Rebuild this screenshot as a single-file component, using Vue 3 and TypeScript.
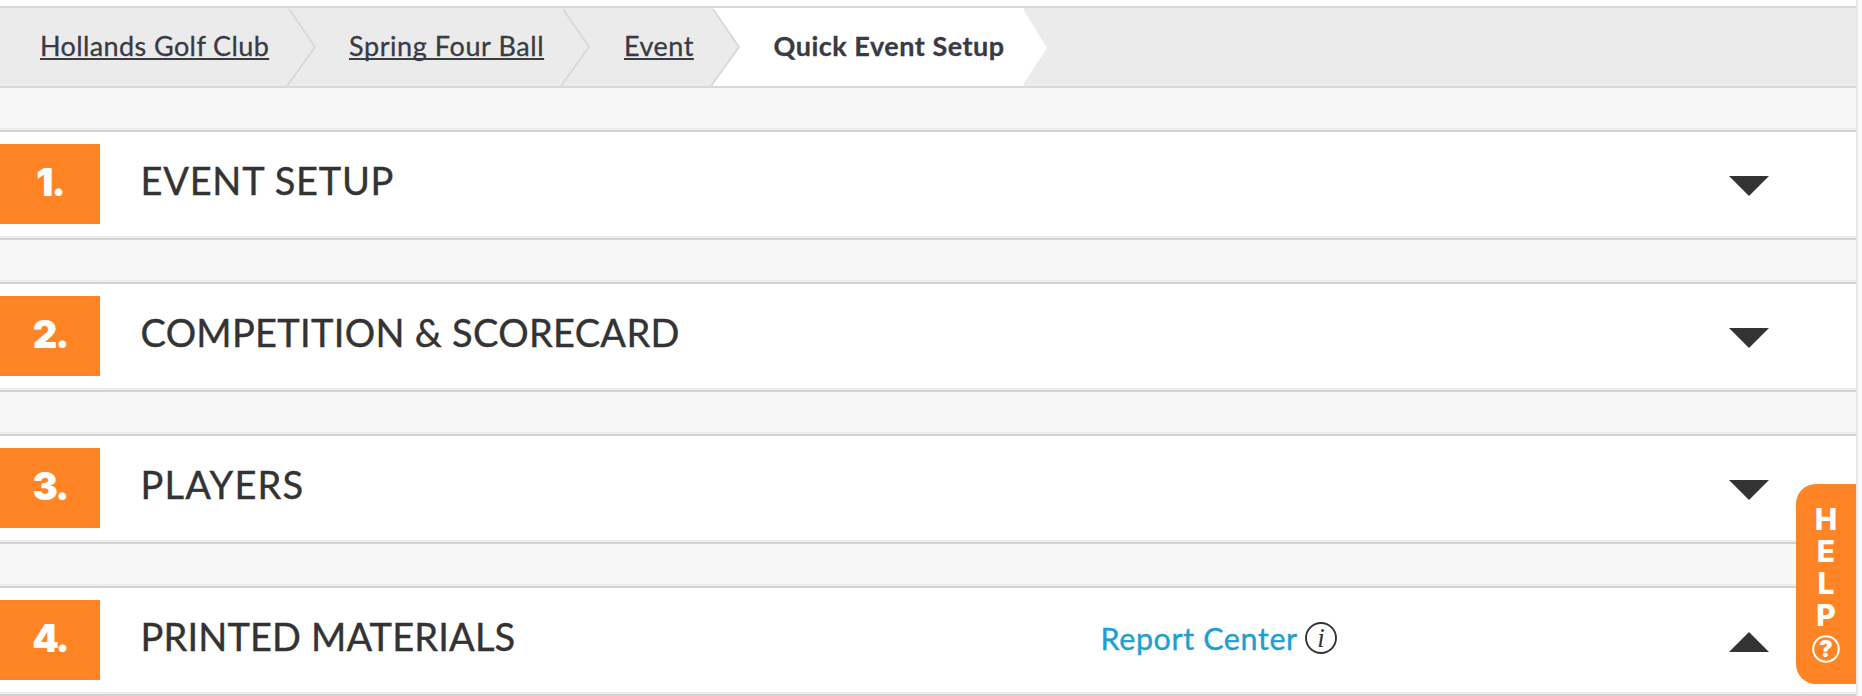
<script setup lang="ts">
interface Crumb { label: string; key: string }
interface Section { title: string; key: string; open: boolean; link?: string }

const crumbs: Crumb[] = [
  { label: 'Hollands Golf Club', key: 'club' },
  { label: 'Spring Four Ball', key: 'tournament' },
  { label: 'Event', key: 'event' },
]

const sections: Section[] = [
  { title: 'EVENT SETUP', key: 'setup', open: false },
  { title: 'COMPETITION & SCORECARD', key: 'scorecard', open: false },
  { title: 'PLAYERS', key: 'players', open: false },
  { title: 'PRINTED MATERIALS', key: 'printed', open: true, link: 'Report Center' },
]
</script>

<template>
  <div class="page">
    <main class="content">
      <nav class="breadcrumbs">
        <div v-for="(crumb, i) in crumbs" :key="crumb.key" class="crumb" :class="crumb.key">
          <a>{{ crumb.label }}</a>
          <svg class="chevron" width="30" height="78" viewBox="0 0 30 78">
            <path v-if="i === crumbs.length - 1" d="M3 0H30V78H3V76L29 39L3 2Z" fill="#fff" />
            <path d="M3 1L29 39L1 78" fill="none" stroke="#d8d8d8" stroke-width="1.8" />
          </svg>
        </div>
        <div class="current"><span>Quick Event Setup</span></div>
        <svg width="24" height="78" viewBox="0 0 24 78">
          <path d="M0 0H1V2.500L24 40L1 75V78H0Z" fill="#fff" />
        </svg>
      </nav>

      <section v-for="(section, i) in sections" :key="section.key" class="section">
        <div class="number">{{ i + 1 }}.</div>
        <h2 class="title" :class="section.key">{{ section.title }}</h2>
        <div v-if="section.link" class="report">
          <a>{{ section.link }}</a>
          <svg width="32" height="32" viewBox="0 0 32 32">
            <circle cx="16" cy="16" r="15" fill="none" stroke="#333" stroke-width="1.9" />
            <text x="16" y="24.500" text-anchor="middle" class="info">i</text>
          </svg>
        </div>
        <svg class="arrow" width="40" height="20" viewBox="0 0 40 20">
          <path :d="section.open ? 'M0 20L20 0L40 20Z' : 'M0 0H40L20 20Z'" fill="#333" />
        </svg>
      </section>
    </main>

    <aside class="help">
      <span v-for="letter in 'HELP'" :key="letter">{{ letter }}</span>
      <svg width="28" height="28" viewBox="0 0 28 28">
        <circle cx="14" cy="14" r="12.800" fill="none" stroke="#fff" stroke-width="2" />
        <text x="14" y="22" text-anchor="middle" class="question">?</text>
      </svg>
    </aside>
  </div>
</template>

<style>
body {
  margin: 0;
  overflow: hidden;
}
</style>

<style scoped>
.page {
  position: relative;
  box-sizing: border-box;
  height: 696px;
  padding-right: 6px;
  overflow: hidden;
  background: linear-gradient(to right, #e8e8e8 2px, #fafafa 2px) right / 6px 100% no-repeat;
  color: #333;
  font-family: Lato, "Liberation Sans", sans-serif;
}
.content {
  height: 696px;
  box-sizing: border-box;
  padding-top: 6px;
  overflow: hidden;
  background: linear-gradient(#fff 6px, #f7f7f7 6px);
}
.breadcrumbs {
  display: flex;
  height: 78px;
  margin-bottom: 42px;
  border-top: 2px solid #d8d8d8;
  border-bottom: 2px solid #d8d8d8;
  background: #ebebeb;
  color: #3a3a42;
  font-size: 27px;
  line-height: 76px;
  white-space: nowrap;
}
.crumb {
  display: flex;
  justify-content: space-between;
  box-sizing: border-box;
  -webkit-text-stroke: 0.3px currentColor;
}
.crumb a {
  text-decoration: underline;
  text-decoration-thickness: 2px;
  text-decoration-skip-ink: none;
  text-underline-offset: 2px;
}
.club {
  width: 316px;
  padding-left: 40px;
  letter-spacing: 0.39px;
}
.tournament {
  width: 274px;
  padding-left: 33px;
  letter-spacing: 0.58px;
}
.event {
  width: 149.500px;
  padding-left: 34px;
  letter-spacing: 0.5px;
}
.current {
  box-sizing: border-box;
  width: 283.500px;
  padding-left: 34px;
  background: #fff;
  font-weight: 700;
  letter-spacing: 0.52px;
  -webkit-text-stroke: 0.3px currentColor;
}
.section {
  display: flex;
  align-items: flex-start;
  box-sizing: border-box;
  height: 110px;
  margin-bottom: 42px;
  padding-right: 87px;
  border-top: 2px solid #d1d1d1;
  border-bottom: 2px solid #d1d1d1;
  background: #fff;
  box-shadow: inset 0 -2px #eee, 0 -2px #eee;
}
.number {
  box-sizing: border-box;
  width: 100px;
  height: 80px;
  margin-top: 12px;
  background: #ff8426;
  color: #fff;
  font-family: Inter, sans-serif;
  font-size: 38px;
  font-weight: 900;
  letter-spacing: -2px;
  line-height: 77px;
  text-align: center;
}
.title {
  margin: 0 0 0 40.500px;
  font-size: 38px;
  font-weight: 400;
  line-height: 96px;
  white-space: nowrap;
  -webkit-text-stroke: 0.4px currentColor;
}
.setup {
  letter-spacing: 0.75px;
}
.scorecard {
  letter-spacing: 0.3px;
}
.players {
  letter-spacing: 1.2px;
}
.printed {
  width: 960px;
  letter-spacing: 0.15px;
}
.report {
  display: flex;
  color: #1f9fcf;
  font-size: 30.500px;
  letter-spacing: 0.6px;
  line-height: 100px;
  white-space: nowrap;
  -webkit-text-stroke: 0.4px currentColor;
}
.report a {
  width: 204.500px;
}
.report svg {
  margin-top: 34px;
  -webkit-text-stroke: 0;
}
.info {
  fill: #333;
  font: italic 27px "Liberation Serif", serif;
  letter-spacing: 0;
}
.arrow {
  margin: 44px 0 0 auto;
}
.help {
  position: absolute;
  top: 484px;
  right: 6px;
  display: flex;
  flex-direction: column;
  align-items: center;
  box-sizing: border-box;
  width: 60px;
  height: 200px;
  padding-top: 19px;
  border-radius: 20px 0 0 20px;
  background: #ff8426;
  color: #fff;
  font-family: Inter, sans-serif;
  font-size: 30px;
  font-weight: 800;
  line-height: 32px;
}
.help svg {
  margin-top: 3.500px;
}
.question {
  fill: #fff;
  font: 900 22.500px Inter, sans-serif;
}
</style>
